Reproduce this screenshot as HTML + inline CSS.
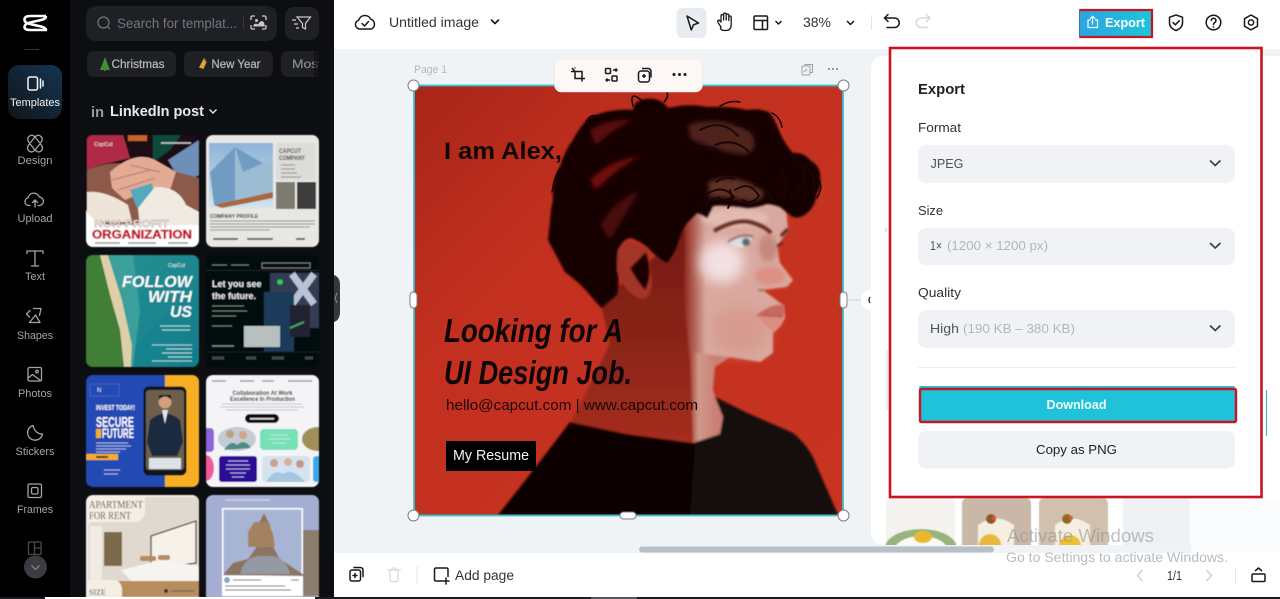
<!DOCTYPE html>
<html lang="en"><head><meta charset="utf-8"><title>Export</title>
<style>
html,body{margin:0;padding:0;background:#fff;overflow:hidden}
svg{display:block}
text{font-family:"Liberation Sans",sans-serif}
</style></head><body>
<svg xmlns="http://www.w3.org/2000/svg" width="1280" height="599" viewBox="0 0 1280 599">
<defs>
<linearGradient id="act" x1="0" y1="1" x2="1" y2="0"><stop offset="0" stop-color="#121418"/><stop offset="1" stop-color="#133552"/></linearGradient>
<linearGradient id="exp" x1="0" y1="0" x2="1" y2="0"><stop offset="0" stop-color="#2aa4e4"/><stop offset="1" stop-color="#1cc6d8"/></linearGradient>
<linearGradient id="redbg" x1="0" y1="0" x2="1" y2="1"><stop offset="0" stop-color="#a92619"/><stop offset=".35" stop-color="#c4301f"/><stop offset="1" stop-color="#c83421"/></linearGradient>
<linearGradient id="face" gradientUnits="userSpaceOnUse" x1="684" y1="0" x2="706" y2="0"><stop offset="0" stop-color="#8f271a"/><stop offset="1" stop-color="#d9a89e"/></linearGradient>
<linearGradient id="neck" gradientUnits="userSpaceOnUse" x1="0" y1="250" x2="0" y2="440"><stop offset="0" stop-color="#7a1c14"/><stop offset=".6" stop-color="#8f271a"/><stop offset="1" stop-color="#a62d1d"/></linearGradient>
<linearGradient id="lit" gradientUnits="userSpaceOnUse" x1="688" y1="0" x2="715" y2="0"><stop offset="0" stop-color="#9c2f20"/><stop offset=".4" stop-color="#d09a8c"/><stop offset="1" stop-color="#c98074"/></linearGradient>
<linearGradient id="sea" x1="0" y1="0" x2="1" y2="1"><stop offset="0" stop-color="#2b9294"/><stop offset="1" stop-color="#0f7d8c"/></linearGradient>
<linearGradient id="sky" x1="0" y1="0" x2="0" y2="1"><stop offset="0" stop-color="#8fb4d8"/><stop offset="1" stop-color="#d4e2ec"/></linearGradient>
<clipPath id="cv"><rect x="414" y="86" width="429" height="429"/></clipPath>
<clipPath id="c1"><rect x="86" y="135" width="113" height="112" rx="7"/></clipPath>
<clipPath id="c2"><rect x="206" y="135" width="113" height="112" rx="7"/></clipPath>
<clipPath id="c3"><rect x="86" y="255" width="113" height="112" rx="7"/></clipPath>
<clipPath id="c4"><rect x="206" y="255" width="113" height="112" rx="7"/></clipPath>
<clipPath id="c5"><rect x="86" y="375" width="113" height="112" rx="7"/></clipPath>
<clipPath id="c6"><rect x="206" y="375" width="113" height="112" rx="7"/></clipPath>
<clipPath id="c7"><rect x="86" y="495" width="113" height="112" rx="7"/></clipPath>
<clipPath id="c8"><rect x="206" y="495" width="113" height="112" rx="7"/></clipPath>
<clipPath id="chip"><rect x="70" y="45" width="249" height="40"/></clipPath>
<clipPath id="cake"><rect x="871" y="498" width="330" height="47"/></clipPath>
<filter id="soft" x="-5%" y="-5%" width="110%" height="110%"><feGaussianBlur stdDeviation="1"/></filter>
<filter id="soft2" x="-5%" y="-5%" width="110%" height="110%"><feGaussianBlur stdDeviation=".4"/></filter>
<filter id="shade" x="-40%" y="-40%" width="180%" height="180%"><feGaussianBlur stdDeviation="6"/></filter>
<filter id="shade2" x="-40%" y="-40%" width="180%" height="180%"><feGaussianBlur stdDeviation="2.500"/></filter>
</defs>

<!-- base -->
<rect width="1280" height="599" fill="#fff"/>
<rect x="334" y="49" width="946" height="504" fill="#f0f3f6"/>

<!-- right neighbour page -->
<rect x="871" y="56" width="420" height="489" rx="12" fill="#fff"/>
<rect x="1191" y="498" width="89" height="55" fill="#fbfcfd"/>
<path d="M887 350V410" stroke="#d8dbdf" stroke-width="1"/>
<path d="M886 228V232" stroke="#b9bcc1" stroke-width="1"/>
<path d="M1266.5 390V436" stroke="#3fb7c6" stroke-width="1.2"/>
<g clip-path="url(#cake)" filter="url(#soft2)">
  <rect x="886" y="498" width="69" height="60" rx="5" fill="#f4f3f0"/>
  <ellipse cx="921" cy="548" rx="36" ry="19" fill="#98b37b"/>
  <ellipse cx="921" cy="553" rx="28" ry="17" fill="#fbfaf4"/>
  <ellipse cx="923" cy="537" rx="9" ry="6" fill="#e8b92a"/>
  <rect x="962" y="498" width="69" height="60" rx="5" fill="#c9b8a8"/>
  <path d="M978 525Q996 512 1014 525V550H978Z" fill="#f5efdf"/>
  <circle cx="990" cy="545" r="11" fill="#e9b93d"/><circle cx="991" cy="519" r="5" fill="#8b5a24"/><circle cx="994" cy="518" r="2.200" fill="#d9542c"/>
  <rect x="1039" y="498" width="69" height="60" rx="5" fill="#d1c0ae"/>
  <path d="M1055 525Q1072 512 1090 525V550H1055Z" fill="#f5efdf"/>
  <circle cx="1070" cy="546" r="11" fill="#edc133"/><circle cx="1067" cy="519" r="5" fill="#8f6a24"/><circle cx="1071" cy="518" r="2.200" fill="#dd5a2c"/>
  <rect x="1123" y="498" width="67" height="50" fill="#eef1f4"/>
</g>

<!-- left rail / panel -->
<rect x="0" y="0" width="70" height="599" fill="#000"/>
<rect x="70" y="0" width="264" height="599" fill="#0d0e12"/>
<path d="M334 275q6 2 6 10v27q0 8-6 10Z" fill="#36373b"/>
<path d="M337 293l-2 5 2 5" stroke="#8c8d90" fill="none" stroke-width="1"/>

<!-- logo -->
<path d="M46 16H30.500Q24.500 16 24.500 19.500T30 24L41 26.500Q46 27.700 46 30H30.500Q24.500 30 24.500 27T30 22.500L41 20Q46 19 46 16" fill="none" stroke="#fff" stroke-width="2.600" stroke-linejoin="round"/>
<rect x="24" y="49" width="15" height="1" fill="#35363a"/>

<rect x="8" y="65" width="54" height="54" rx="11" fill="url(#act)"/>
<g fill="none" stroke="#f2f3f4" stroke-width="1.500" stroke-linejoin="round">
<rect x="28" y="77" width="9.500" height="13" rx="1.800"/><path d="M40.500 79V88M43 81V86" stroke-linecap="round"/>
</g>
<text x="35" y="106" text-anchor="middle" font-size="11" fill="#f2f3f4" textLength="50" lengthAdjust="spacingAndGlyphs">Templates</text>

<g fill="none" stroke="#a3a5a9" stroke-width="1.300" stroke-linejoin="round" stroke-linecap="round">
<path d="M29 136.500q3-3 6.500 1l5.500 7q3 4 0 6.500t-6.500-1.500l-5.500-7q-2.500-3.500 0-6ZM41 136.500q-3-3-6.500 1l-5.500 7q-3 4 0 6.500t6.500-1.500l5.500-7q2.500-3.500 0-6Z"/>
<path d="M30 205.500h-1.500a3.800 3.800 0 0 1-.6-7.500 6 6 0 0 1 11.500-1 4.300 4.300 0 0 1 .6 8.500H38M35 207v-7M32.500 202.500l2.500-2.500 2.500 2.500"/>
<path d="M27 251h16M35 251v15M31.500 266h7M27 251v2.500M43 251v2.500"/>
<path d="M30 310.500l-3.500 3.500 3 3M33.500 308.500h7.500l-1.500 7M35.500 315l4.500 7.500H29.500Z"/>
<rect x="28" y="367.500" width="13.500" height="13.500" rx="1.500"/><circle cx="37" cy="371.500" r="1.300"/><path d="M28 378l4.500-3.500 8 6"/>
<path d="M33 425.500a7.500 7.500 0 1 0 9.500 8.500Q35 434 33 425.500Z"/>
<rect x="28" y="484" width="13.500" height="13.500" rx="1.500"/><rect x="31.500" y="487.500" width="6.500" height="6.500" rx="1.500"/>
<g stroke="#4a4b4f"><rect x="28.500" y="542" width="12.500" height="12.500" rx="1"/><path d="M34.500 542v12.500M34.500 548h6.500"/></g>
</g>
<g font-size="11" fill="#a3a5a9" text-anchor="middle">
<text x="35" y="164" textLength="35" lengthAdjust="spacingAndGlyphs">Design</text>
<text x="35" y="222" textLength="35" lengthAdjust="spacingAndGlyphs">Upload</text>
<text x="35" y="280" textLength="20" lengthAdjust="spacingAndGlyphs">Text</text>
<text x="35" y="339" textLength="36" lengthAdjust="spacingAndGlyphs">Shapes</text>
<text x="35" y="397" textLength="34" lengthAdjust="spacingAndGlyphs">Photos</text>
<text x="35" y="455" textLength="39" lengthAdjust="spacingAndGlyphs">Stickers</text>
<text x="35" y="513" textLength="36" lengthAdjust="spacingAndGlyphs">Frames</text>
</g>
<circle cx="35.500" cy="567" r="11.500" fill="#3b3c41"/>
<path d="M31.500 565.500l4 4 4-4" fill="none" stroke="#808186" stroke-width="1.300"/>

<!-- search -->
<rect x="86" y="6" width="191" height="35" rx="10" fill="#1f2025"/>
<circle cx="103.500" cy="22.500" r="5.500" fill="none" stroke="#75777c" stroke-width="1.200"/><path d="M107.500 26.500l2.500 2.500" stroke="#75777c" stroke-width="1.200"/>
<text x="117" y="28" font-size="13.500" fill="#74767b" textLength="120" lengthAdjust="spacingAndGlyphs">Search for templat...</text>
<rect x="243" y="17" width="1" height="11" fill="#3a3b40"/>
<g fill="none" stroke="#c8c9cc" stroke-width="1.300"><path d="M251 20v-2.500q0-1.500 1.500-1.500h2.500M262 16h2.500q1.500 0 1.500 1.500V20M251 25v2.500q0 1.500 1.500 1.500h2.500M262 29h2.500q1.500 0 1.500-1.500V25"/></g><path d="M253 26.500q1-3 3-3l2 1q2-3.500 4-3.500t3 5.500Z" fill="#c8c9cc"/><circle cx="256.500" cy="20.500" r="1.500" fill="#c8c9cc"/>
<rect x="285" y="7" width="34" height="33" rx="9" fill="#1f2025"/>
<path d="M297 17h13.500l-5 6.500v5.500l-3-1.500v-4Z M292 20h4M294 24h4M296 28h3" fill="none" stroke="#c8c9cc" stroke-width="1.200"/>

<!-- chips -->
<g clip-path="url(#chip)">
<rect x="87" y="51" width="89" height="26" rx="7" fill="#1f2025"/>
<rect x="184" y="51" width="89" height="26" rx="7" fill="#1f2025"/>
<rect x="281" y="51" width="60" height="26" rx="7" fill="#1f2025"/>
<path d="M105 57l-5 13h10Z" fill="#3d8f3c"/><rect x="104" y="69" width="2" height="2" fill="#8a5a2a"/>
<path d="M204 58l2.500 4-3 7-4.500-1.500Z" fill="#e0a432"/><path d="M204 58l3 5" stroke="#555" stroke-width="1"/>
<text x="111.500" y="68" font-size="11.500" fill="#b4b6ba" stroke="#b4b6ba" stroke-width=".25" textLength="53" lengthAdjust="spacingAndGlyphs">Christmas</text>
<text x="211.500" y="68" font-size="11.500" fill="#b4b6ba" stroke="#b4b6ba" stroke-width=".25" textLength="49" lengthAdjust="spacingAndGlyphs">New Year</text>
<text x="292" y="68" font-size="11.500" fill="#85878b" stroke="#85878b" stroke-width=".25" textLength="30" lengthAdjust="spacingAndGlyphs">Most</text>
</g>
<rect x="314" y="51" width="5" height="26" fill="#0d0e12" opacity=".6"/>

<text x="91" y="117" font-size="14.500" font-weight="bold" fill="#9a9ca0" textLength="13" lengthAdjust="spacingAndGlyphs">in</text>
<text x="110" y="116" font-size="14.500" font-weight="bold" fill="#e8e9ea" textLength="94" lengthAdjust="spacingAndGlyphs">LinkedIn post</text>
<path d="M209.500 109.500l3.500 3.500 3.500-3.500" fill="none" stroke="#e8e9ea" stroke-width="1.400"/>

<!-- thumbnails -->
<g filter="url(#soft2)">
<g clip-path="url(#c1)">
  <rect x="86" y="135" width="113" height="112" fill="#1b1012"/>
  <path d="M87 135H123L130 158 100 165 87 170Z" fill="#b02a45"/>
  <rect x="128" y="135" width="19" height="6" fill="#c8622a"/>
  <path d="M153 135H181L170 150 153 162Z" fill="#114a3c"/>
  <path d="M168 160L199 140V175L182 184Z" fill="#6e8fb8"/>
  <path d="M87 170Q110 160 130 165L170 170 199 178V225H87Z" fill="#8d5a48"/>
  <path d="M110 172Q135 150 155 160L176 172 170 190 150 190 125 200 112 188Z" fill="#e3aa94"/>
  <path d="M112 180L150 170M118 190L155 178M130 165L160 172" stroke="#b97a66" stroke-width="1" fill="none"/>
  <path d="M87 192Q105 190 128 205L132 222H87Z" fill="#eee4d8"/>
  <path d="M130 190L152 183 154 198 137 208Z" fill="#52a9bd"/>
  <path d="M138 208L155 187Q178 186 186 205L199 212V228H140Z" fill="#f1eae2"/>
  <path d="M86 210Q92 222 110 225H199V247H86Z" fill="#fff"/>
  <text x="94" y="227" font-size="10" font-weight="bold" fill="#f7e6e3" stroke="#a79b99" stroke-width=".4" textLength="75" lengthAdjust="spacingAndGlyphs">NON-PROFIT</text>
  <text x="92" y="238.500" font-size="11.500" font-weight="bold" fill="#c3142b" stroke="#c3142b" stroke-width=".5" textLength="100" lengthAdjust="spacingAndGlyphs">ORGANIZATION</text>
  <path d="M95 243h25M128 243h28M168 243h20" stroke="#777" stroke-width="1.200"/>
  <text x="94" y="146" font-size="5.500" fill="#eee">CapCut</text>
  <path d="M161 143h30" stroke="#ccc" stroke-width="1.500"/>
</g>
<g clip-path="url(#c2)">
  <rect x="206" y="135" width="113" height="112" fill="#e8e7e3"/>
  <rect x="276" y="143" width="40" height="37" fill="#dcdcd9"/>
  <rect x="209" y="143" width="64" height="65" fill="url(#sky)"/>
  <path d="M210 172L235 147 266 165 273 159V198L222 204 214 205Z" fill="#6f9cc2"/>
  <path d="M235 147L243 172 273 159V198L245 202 235 200Z" fill="#9cbcd4"/>
  <path d="M214 205L273 192V198L222 208Z" fill="#a8673a"/>
  <text x="279" y="153" font-size="6.500" font-weight="bold" fill="#444" textLength="22" lengthAdjust="spacingAndGlyphs">CAPCUT</text>
  <text x="279" y="160" font-size="6.500" font-weight="bold" fill="#444" textLength="26" lengthAdjust="spacingAndGlyphs">COMPANY</text>
  <path d="M281 165h14M281 169h14M281 173h16M281 177h20" stroke="#888" stroke-width="1"/>
  <rect x="276" y="182" width="19" height="27" fill="#7d7a70"/><rect x="297" y="182" width="19" height="27" fill="#3d3d3a"/>
  <text x="210" y="218" font-size="5" font-weight="bold" fill="#222">COMPANY PROFILE</text>
  <path d="M210 221h105M210 224h105M210 227h100M210 230h60" stroke="#8a8a88" stroke-width="1"/>
  <path d="M213 239h25M247 239h26M296 239h9" stroke="#666" stroke-width="2"/>
</g>
<g clip-path="url(#c3)">
  <rect x="86" y="255" width="113" height="112" fill="url(#sea)"/>
  <path d="M86 255h14L112 300 122 340 124 367H86Z" fill="#3f7f35"/>
  <path d="M100 255h8L122 300 132 345 131 367H124L120 330 110 295Z" fill="#ddcfa8"/>
  <path d="M108 255h25L140 310 133 367H131L132 345 122 300Z" fill="#3a9f9c"/>
  <text x="122" y="287" font-size="16" font-weight="bold" font-style="italic" fill="#fff" textLength="70" lengthAdjust="spacingAndGlyphs">FOLLOW</text>
  <text x="148" y="302" font-size="16" font-weight="bold" font-style="italic" fill="#fff" textLength="44" lengthAdjust="spacingAndGlyphs">WITH</text>
  <text x="170" y="317" font-size="16" font-weight="bold" font-style="italic" fill="#fff" textLength="22" lengthAdjust="spacingAndGlyphs">US</text>
  <path d="M152 345h40M152 361h40" stroke="#cfeef0" stroke-width=".8"/>
  <path d="M160 326h30M162 330h28M166 349h26M162 353h30M168 357h24" stroke="#a8dcdc" stroke-width=".9"/>
  <text x="168" y="267" font-size="5" fill="#e8f4f4">CapCut</text>
</g>
<g clip-path="url(#c4)">
  <rect x="206" y="255" width="113" height="112" fill="#060708"/>
  <path d="M212 265h15M231 265h18M262 263h48v5h-48Z" stroke="#777" stroke-width="1" fill="none"/>
  <rect x="206" y="270" width="113" height=".8" fill="#2a2a2a"/>
  <rect x="270" y="273" width="49" height="55" fill="#313d52"/>
  <path d="M292 274l22 30M314 274l-22 30" stroke="#b9c3d6" stroke-width="7"/>
  <rect x="264" y="292" width="30" height="60" fill="#1c3a5a"/>
  <rect x="290" y="305" width="20" height="32" fill="#223"/><path d="M290 328l14-6" stroke="#38b060" stroke-width="2"/>
  <rect x="206" y="272" width="58" height="60" fill="#060708"/>
  <text x="212" y="287" font-size="9" font-weight="bold" fill="#f0f0f0">Let you see</text>
  <text x="212" y="299" font-size="9" font-weight="bold" fill="#f0f0f0">the future.</text>
  <circle cx="280" cy="282" r="2.800" fill="#2ec95c"/>
  <rect x="244" y="326" width="36" height="21" fill="#b7c0bf"/>
  <path d="M212 306h32M212 311h35M212 316h24M212 326h20" stroke="#6f7a72" stroke-width="1"/>
  <path d="M212 346h22" stroke="#888" stroke-width="1.500"/>
  <path d="M206 352h113" stroke="#1a1a1a"/>
  <path d="M212 358h12M246 358h10M272 358h12M305 358h8" stroke="#444" stroke-width="3"/>
</g>
<g clip-path="url(#c5)">
  <rect x="86" y="375" width="113" height="112" fill="#2148b4"/>
  <rect x="165" y="375" width="34" height="112" fill="#f8ae22"/>
  <rect x="90" y="384" width="29" height="12" fill="none" stroke="#5a78cc" stroke-width=".6"/>
  <text x="97" y="392" font-size="6" fill="#e4e9f6">N</text>
  <text x="96" y="410" font-size="7.500" font-weight="bold" fill="#fff" textLength="39" lengthAdjust="spacingAndGlyphs">INVEST TODAY!</text>
  <text x="96" y="427" font-size="15" font-weight="bold" fill="#fff" textLength="38" lengthAdjust="spacingAndGlyphs">SECURE</text>
  <rect x="96" y="429" width="5" height="9" fill="#f8ae22"/>
  <text x="102" y="438" font-size="14" font-weight="bold" fill="#fff" textLength="32" lengthAdjust="spacingAndGlyphs">FUTURE</text>
  <path d="M96 443h32M96 446h35M96 449h30M96 452h24" stroke="#a8b8e4" stroke-width=".9"/>
  <rect x="86" y="454" width="32" height="6" fill="#f8ae22"/><rect x="96" y="456" width="12" height="2" fill="#333"/>
  <path d="M104 470h16M104 474h14" stroke="#a8b8e4" stroke-width="1"/>
  <rect x="144" y="387" width="42" height="88" rx="5" fill="#11151c" stroke="#0b0e14" stroke-width="1"/>
  <rect x="146" y="390" width="38" height="80" rx="3" fill="#6d5f4b"/>
  <circle cx="165" cy="402" r="6.500" fill="#d1a07e"/><path d="M158.500 400q6.500-7 13 0l-1-5h-11Z" fill="#1c1612"/>
  <path d="M150 420q15-13 30 0l3 22-6 14h-25l-5-14Z" fill="#1f2a40"/>
  <path d="M162 410l3 14 3-14Z" fill="#e4e4ea"/>
  <rect x="149" y="458" width="32" height="11" fill="#dbe2ea"/>
</g>
<g clip-path="url(#c6)">
  <rect x="206" y="375" width="113" height="112" fill="#f4f4f7"/>
  <path d="M212 381h14M240 381h14M262 381h12M288 381h24" stroke="#888" stroke-width="1.200"/>
  <text x="262.500" y="395" text-anchor="middle" font-size="6.500" font-weight="bold" fill="#222" textLength="60" lengthAdjust="spacingAndGlyphs">Collaboration At Work</text>
  <text x="262.500" y="401" text-anchor="middle" font-size="6.500" font-weight="bold" fill="#222" textLength="65" lengthAdjust="spacingAndGlyphs">Excellence In Production</text>
  <path d="M222 404h80M220 407h84M226 410h72" stroke="#c6c6cc" stroke-width="1"/>
  <rect x="245" y="414" width="34" height="9" rx="4.500" fill="#0c0c0e"/><rect x="250" y="418" width="24" height="1.500" fill="#ddd"/>
  <rect x="200" y="428" width="14" height="24" rx="4" fill="#8d63dc"/>
  <ellipse cx="237" cy="439" rx="19" ry="12" fill="#c2ccd2"/><circle cx="230" cy="434" r="4" fill="#c79b82"/><circle cx="243" cy="435" r="4" fill="#d2a58a"/><path d="M224 450q7-11 13-5 8-7 14 3" fill="#4f8a86"/>
  <rect x="260" y="429" width="38" height="21" rx="4" fill="#76e0b7"/><path d="M270 435h18M268 439h22M272 443h14" stroke="#b8f0da"/>
  <ellipse cx="318" cy="439" rx="16" ry="12" fill="#a08f58"/>
  <ellipse cx="206" cy="468" rx="8" ry="13" fill="#ef5a9b"/>
  <rect x="219" y="456" width="38" height="26" rx="3" fill="#2c0f94"/><path d="M228 461h20M226 465h24M226 469h24M230 473h16M232 477h12" stroke="#b6a8ea" stroke-width=".9"/>
  <rect x="262" y="456" width="48" height="26" rx="4" fill="#d4e3ef"/><circle cx="274" cy="463" r="4" fill="#caa088"/><circle cx="288" cy="462" r="4" fill="#d5b199"/><circle cx="300" cy="464" r="4" fill="#c4967e"/><path d="M266 482q8-14 17-8 9-7 22 8" fill="#a4c6e0"/>
  <rect x="313" y="456" width="10" height="26" rx="3" fill="#37a8ec"/>
</g>
<g clip-path="url(#c7)">
  <rect x="86" y="495" width="113" height="112" fill="#f4efe4"/>
  <path d="M88 527q0-5 5-5h42q8 0 10-10V497h54v100H88Z" fill="#e0d9cf"/>
  <rect x="104" y="532" width="18" height="34" fill="#7c6b4d"/><rect x="90" y="526" width="12" height="56" fill="#f0ece4"/>
  <path d="M151 536l45-15v42l-45 6Z" fill="#f6f2e9" stroke="#4e3a2a" stroke-width="1.300"/>
  <path d="M121 570l40-10 38 6v21h-62Z" fill="#f5f4f0"/>
  <path d="M110 581h89v16H110Z" fill="#b88d5d"/>
  <rect x="140" y="556" width="16" height="5" rx="2" fill="#b78b60"/><rect x="158" y="555" width="12" height="5" rx="2" fill="#b78b60"/>
  <path d="M86 580h28q6 0 8 8v9H86Z" fill="#f4efe4"/>
  <text x="89" y="508" font-size="11" fill="#4b453d" style="font-family:'Liberation Serif',serif" textLength="54" lengthAdjust="spacingAndGlyphs">APARTMENT</text>
  <text x="89" y="519" font-size="11" fill="#4b453d" style="font-family:'Liberation Serif',serif" textLength="42" lengthAdjust="spacingAndGlyphs">FOR RENT</text>
  <text x="89" y="595" font-size="8" fill="#3e3a33" style="font-family:'Liberation Serif',serif">SIZE</text>
  <circle cx="166" cy="591" r="2" fill="#333"/>
  <path d="M171 591h23" stroke="#666" stroke-width="1.200"/>
</g>
<g clip-path="url(#c8)">
  <rect x="206" y="495" width="113" height="112" fill="#a4aed2"/>
  <rect x="222" y="508" width="81" height="88" fill="#fff"/>
  <rect x="223.500" y="509.500" width="78" height="66" fill="#a8b4d4"/>
  <path d="M223 575l10-12 15-4 10-14v-20l6-12 6 12 2 20 8 14 24 16v1Z" fill="#8a7460"/>
  <path d="M248 532l6-10h14l5 12 2 13h-27Z" fill="#a4825e"/>
  <path d="M240 574q5-18 20-18h10q15 0 20 18Z" fill="#949aa4"/>
  <rect x="303" y="530" width="19" height="66" fill="#8c7d6c"/>
  <path d="M225 500h45" stroke="#d0d6e6" stroke-width="1.200"/>
  <circle cx="227" cy="580" r="3" fill="#8ea0cc"/>
  <path d="M233 580h28M291 580h8M225 586h60M225 590h66" stroke="#555" stroke-width="1"/>
</g>
</g>

<!-- top bar -->
<rect x="334" y="0" width="946" height="49" fill="#fff"/>
<g fill="none" stroke="#17191c" stroke-width="1.500" stroke-linecap="round" stroke-linejoin="round">
<path d="M359.500 29a4.500 4.500 0 0 1-.8-8.800 6.500 6.500 0 0 1 12.100-1 5.300 5.300 0 0 1 .7 9.800Z"/><path d="M362 23.500l2.500 2.500 4-4.500"/>
<path d="M491.500 20l3.500 3.500 3.500-3.500" stroke-width="1.600"/>
</g>
<text x="389" y="27" font-size="13.500" fill="#30343a" textLength="90" lengthAdjust="spacingAndGlyphs">Untitled image</text>

<rect x="676.500" y="8" width="30" height="30" rx="6" fill="#e8ecf0"/>
<path d="M687 16l11.500 7-5 1.800-2.200 5.200Z" fill="none" stroke="#17191c" stroke-width="1.500" stroke-linejoin="round"/>
<path d="M721 27l-3-4.500q-1-2 1-2.500l2 2v-6q0-1.500 1.300-1.500t1.300 1.500v4-5.500q0-1.500 1.300-1.500t1.300 1.500v5.500-4.500q0-1.500 1.300-1.500t1.300 1.500v5-3q0-1.500 1.200-1.500t1.200 1.500v7q0 6-5.500 6h-1.500q-2.500 0-3.800-2Z" fill="none" stroke="#17191c" stroke-width="1.300" stroke-linejoin="round"/>
<g fill="none" stroke="#17191c" stroke-width="1.500" stroke-linejoin="round">
<rect x="754" y="16" width="13.500" height="13.500" rx="1.200"/><path d="M754 20.500h13.500M762.500 20.500v9"/>
<path d="M775.500 21l3 3 3-3"/><path d="M847 21l3.500 3.500 3.500-3.500"/>
</g>
<text x="803" y="27" font-size="13.500" fill="#30343a" textLength="28" lengthAdjust="spacingAndGlyphs">38%</text>
<rect x="871" y="15" width="1" height="15" fill="#e3e5e8"/>
<path d="M885 18h9.500a4.700 4.700 0 0 1 0 9.500H887M888 14.500l-3.500 3.500 3.500 3.500" fill="none" stroke="#17191c" stroke-width="1.500" stroke-linecap="round" stroke-linejoin="round"/>
<path d="M929.500 18H921a4.700 4.700 0 0 0 0 9.500h6.500M926.500 14.500l3.500 3.500-3.500 3.500" fill="none" stroke="#d6d9dc" stroke-width="1.500" stroke-linecap="round" stroke-linejoin="round"/>

<!-- export btn -->
<rect x="1079" y="9" width="74" height="29" fill="url(#exp)"/>
<path d="M1080 10h72v27h-72" fill="none" stroke="#c8141e" stroke-width="2.200"/>
<path d="M1079.500 9v29" stroke="#5a6c9a" stroke-width="1"/>
<g fill="none" stroke="#fff" stroke-width="1.200" stroke-linejoin="round" stroke-linecap="round"><path d="M1090 20h-2v7.500h9.500V20h-2M1092.500 24v-7M1090.500 18.500l2.200-2.200 2.200 2.200"/></g>
<text x="1105" y="27" font-size="13" font-weight="bold" fill="#fff" textLength="40" lengthAdjust="spacingAndGlyphs">Export</text>

<g fill="none" stroke="#17191c" stroke-width="1.500" stroke-linecap="round" stroke-linejoin="round">
<path d="M1176 15l6.500 2.200v5.800q0 5-6.500 7.500-6.500-2.500-6.500-7.500v-5.800Z"/><path d="M1173 22.500l2.300 2.300 4-4"/>
<circle cx="1213.500" cy="22.500" r="7.300"/><path d="M1211.300 20.500a2.300 2.300 0 1 1 3.500 2q-1.300.8-1.300 2"/>
<path d="M1251 15l6.500 3.700v7.500l-6.500 3.700-6.500-3.700v-7.500Z"/><circle cx="1251" cy="22.500" r="2.600"/>
</g>
<circle cx="1213.500" cy="27" r=".9" fill="#17191c"/>

<!-- canvas labels -->
<text x="414" y="73" font-size="11" fill="#b4b8be" textLength="33" lengthAdjust="spacingAndGlyphs">Page 1</text>
<g fill="none" stroke="#9aa0a7" stroke-width="1"><rect x="802" y="66" width="8" height="9" rx="1"/><path d="M805 66v-1.500h7.500v8H810"/><path d="M804 72l3-3"/></g>
<g fill="#8d9299"><circle cx="829" cy="69" r="1.100"/><circle cx="833" cy="69" r="1.100"/><circle cx="837" cy="69" r="1.100"/></g>

<!-- artwork -->
<g clip-path="url(#cv)">
  <rect x="414" y="86" width="429" height="429" fill="url(#redbg)"/>
  <g filter="url(#soft)">
    <!-- neck shadowed -->
    <path d="M600 300L640 270 695 220 700 445 627 436 570 424Q592 382 610 343Z" fill="url(#neck)"/>
    <!-- face -->
    <path d="M686 185H784L788 230 777 247 780 263 793 280 787 287 763 290 783 305 785 318 773 333 773 353 760 362 730 357 715 367 690 360 684 300Z" fill="url(#face)"/>
    <!-- lit neck -->
    <path d="M690 352L730 357 715 367 713 390 723 417 720 434 693 443Z" fill="url(#lit)"/>
    <!-- shirt -->
    <path d="M498 515Q530 475 570 422L627 434 693 443 720 434 723 417 715 397 747 413 793 433Q810 447 817 467L838 515Z" fill="#0c0406"/>
    <path d="M690 515L695 443 720 434 723 417 715 397 747 413 793 433Q810 447 817 467L838 515Z" fill="#1b090c" opacity=".8"/>
  </g>
  <!-- soft face light -->
  <ellipse cx="722" cy="262" rx="22" ry="21" fill="#f3e0e3" filter="url(#shade)"/>
  <ellipse cx="735" cy="218" rx="34" ry="9" fill="#e2bcb0" filter="url(#shade2)"/>
  <ellipse cx="740" cy="330" rx="28" ry="24" fill="#d79b8e" filter="url(#shade)"/>
  <ellipse cx="770" cy="276" rx="15" ry="9" fill="#dc9182" filter="url(#shade2)"/>
  <ellipse cx="768" cy="248" rx="9" ry="14" fill="#c58a7e" filter="url(#shade2)"/>
  <g filter="url(#soft)">
    <!-- lips -->
    <path d="M757 315Q772 303 784 305 786 311 783 317Z" fill="#c6685e"/>
    <path d="M757 315L783 317Q784 326 773 332 766 326 757 315Z" fill="#dc8d80"/>
    <path d="M757 315L783 317" stroke="#a24a42" stroke-width="1"/>
    <path d="M764 290q-6 1-5-1" stroke="#a2564c" stroke-width="1.500" fill="none"/>
    <!-- brow & eye -->
    <path d="M714 231Q735 219 750 222 765 226 771 233" stroke="#5e2a1f" stroke-width="3.800" fill="none"/>
    <path d="M781 236L788 229" stroke="#5e2a1f" stroke-width="3.500"/>
    <path d="M728 243Q742 234 752 238 750 247 738 248Z" fill="#e2dcde"/>
    <circle cx="746" cy="242" r="4" fill="#5a6a76"/>
    <path d="M728 242Q742 233 753 237" stroke="#4a1a14" stroke-width="1.400" fill="none"/>
    <path d="M777 246l6-3" stroke="#5e2218" stroke-width="2.200"/>
    <!-- ear -->
    <path d="M626 240Q616 248 617 266 620 288 638 298 652 302 652 280L648 248Z" fill="#a23426"/>
    <!-- hair -->
    <path d="M553 200Q552 180 560 167 565 150 573 140 580 126 590 117 612 108 633 110 634 100 646 99 660 97 668 108 690 103 707 107 730 106 747 110 762 108 770 113 776 122 780 133 786 146 793 153 803 152 810 160 821 167 820 177 822 186 817 193 815 207 807 213 800 219 793 217 786 212 780 207 772 204 767 204 756 208 747 208 736 206 727 206 720 205 713 206 710 212 707 218 702 214 697 213 692 218 687 223 683 230 680 237 676 252 667 263 658 258 650 250 640 240 630 238 623 240 618 250 617 257 617 270 620 280 617 295 607 303 602 308 600 307 590 295 580 283 565 272 557 257 548 240 550 223 551 210 553 200Z" fill="#160406"/>
    <path d="M630 268Q636 280 645 290 654 275 646 252Z" fill="#1a0506"/>
  </g>
  <!-- hair lights -->
  <path d="M590 180Q610 160 640 156 615 170 596 190Z" fill="#750c0c" filter="url(#shade2)"/>
  <path d="M590 130Q610 118 635 120 610 130 596 146Z" fill="#5c0d0d" filter="url(#shade2)"/>
  <path d="M600 225Q615 200 640 190 625 215 610 240Z" fill="#4a0a0a" filter="url(#shade2)"/>
  <path d="M688 125Q720 115 752 132 760 150 745 155 710 150 690 138Z" fill="#4f211c" filter="url(#shade2)"/>
  <path d="M708 182Q735 172 762 190 768 199 750 202 725 195 710 198Z" fill="#5e3026" filter="url(#shade2)"/>
  <g fill="none" stroke="#1a0507" stroke-width="1.800" stroke-linecap="round">
    <path d="M700 130q22-12 38 6M715 145q20-8 35 8M735 125q16 0 22 18M694 150q16-8 28 4"/>
    <path d="M706 195q16-12 28 2-12 6-16 0M735 190q15-10 24 6-8 10-16 4M755 185q14 2 18 18M700 212q6-12 16-14M728 208q6-10 2-18M716 182q10-6 18-3"/>
    <path d="M790 155q14 6 14 22-4 14-14 20M804 165q12 8 10 26M780 170q10 12 4 28"/>
  </g>
  <g fill="none" stroke="#120305" stroke-width="1.500" stroke-linecap="round">
    <path d="M641 100q-12-10-8 6M664 102q6-6 2-12M720 106q10-6 20-4M772 113q8 4 10 14M818 180q6 6-1 18M596 116q-6-2-10 6M560 168q-6 10-8 24"/>
  </g>
  <text x="444" y="159" font-size="24" font-weight="bold" fill="#120708" textLength="118" lengthAdjust="spacingAndGlyphs">I am Alex,</text>
  <text x="444" y="342" font-size="33" font-weight="bold" font-style="italic" fill="#0f0506" textLength="179" lengthAdjust="spacingAndGlyphs">Looking for A</text>
  <text x="444" y="384" font-size="33" font-weight="bold" font-style="italic" fill="#0f0506" textLength="188" lengthAdjust="spacingAndGlyphs">UI Design Job.</text>
  <text x="446" y="410" font-size="14.500" fill="#1a0808" textLength="252" lengthAdjust="spacingAndGlyphs">hello@capcut.com | www.capcut.com</text>
  <rect x="446" y="441" width="90" height="30" fill="#000"/>
  <text x="453" y="460" font-size="14.500" fill="#f4f4f4" textLength="76" lengthAdjust="spacingAndGlyphs">My Resume</text>
</g>
<rect x="414" y="85.500" width="429" height="430" fill="none" stroke="#35c2d3" stroke-width="1.800"/>
<g fill="#fff" stroke="#7a7f85" stroke-width="1">
<circle cx="413.500" cy="85.500" r="5.500"/><circle cx="843.500" cy="85.500" r="5.500"/><circle cx="413.500" cy="515.500" r="5.500"/><circle cx="843.500" cy="515.500" r="5.500"/>
<rect x="410" y="292" width="7" height="16" rx="3.500"/><rect x="840" y="292" width="7" height="16" rx="3.500"/><rect x="620" y="512" width="16" height="7" rx="3.500"/>
</g>
<path d="M847 300h14" stroke="#cdd2d7"/>
<path d="M871 290a10 10 0 0 0 0 20Z" fill="#fff"/><path d="M870 297q-2 3 0 6" stroke="#222" fill="none" stroke-width="1.300"/>

<!-- floating toolbar -->
<rect x="554.500" y="59" width="148" height="33" rx="7" fill="#fdf7f6" stroke="#e9e5e5" stroke-width=".6"/>
<g fill="none" stroke="#17191c" stroke-width="1.500" stroke-linejoin="round">
<path d="M575 68.500v-1M571 71.500h11v10M575 71.500v7h10"/><path d="M572 68l3 3.500"/>
<rect x="605.500" y="68.500" width="5" height="5" rx="1"/><rect x="612" y="76" width="5" height="5" rx="1"/><path d="M613 70h4l-1.500-1.500M617 70l-1.500 1.500M610 80h-4l1.500-1.500M606 80l1.500 1.500"/>
<rect x="638.500" y="71" width="11" height="11" rx="2.500"/><path d="M642 68.500h6q3 0 3 3v6M644 74v4M642 76h4"/>
</g>
<g fill="#17191c"><circle cx="674" cy="74.500" r="1.500"/><circle cx="679.500" cy="74.500" r="1.500"/><circle cx="685" cy="74.500" r="1.500"/></g>

<!-- bottom bar -->
<rect x="334" y="553" width="946" height="44" fill="#fff"/>
<rect x="639" y="546.500" width="355" height="6" rx="3" fill="#b9bfc6"/>
<g fill="none" stroke-linejoin="round" stroke-linecap="round">
<g stroke="#17191c" stroke-width="1.500"><rect x="350" y="570" width="10.500" height="11" rx="2"/><path d="M354 567.500h6q3 0 3 3v6"/><path d="M355 573.500v4M353 575.500h4"/></g>
<g stroke="#d7dadd" stroke-width="1.300"><path d="M387.500 570h13M390 570v10q0 1.500 1.500 1.500h5q1.500 0 1.500-1.500v-10M392 570v-2h4v2"/></g>
<path d="M417 567v16" stroke="#e3e5e8"/>
<g stroke="#17191c" stroke-width="1.500"><path d="M444 581h-8q-1.500 0-1.500-1.500v-10q0-1.500 1.500-1.500h10.500q1.500 0 1.500 1.500v7M446 578v6M443 581h6"/></g>
</g>
<text x="455" y="580" font-size="13.500" fill="#2e3238" textLength="59" lengthAdjust="spacingAndGlyphs">Add page</text>
<text x="1167" y="580" font-size="13" fill="#2e3238" textLength="15" lengthAdjust="spacingAndGlyphs">1/1</text>
<path d="M1142.500 570l-5 5.500 5 5.500M1206.500 570l5 5.500-5 5.500" fill="none" stroke="#ccd0d4" stroke-width="1.400"/>
<path d="M1235.500 568v15" stroke="#e3e5e8"/>
<g fill="none" stroke="#17191c" stroke-width="1.500" stroke-linejoin="round"><rect x="1252" y="574" width="13" height="7.500" rx="1"/><path d="M1255 571l3.500-3 3.500 3"/></g>
<rect x="0" y="597" width="1280" height="2" fill="#1a1b1e"/>
<rect x="45" y="597" width="270" height="2" fill="#fff"/>
<rect x="591" y="597" width="46" height="2" fill="#55575a"/>

<!-- export panel -->
<rect x="890" y="48" width="371.500" height="449" fill="#fff" stroke="#c8141e" stroke-width="2.600"/>
<text x="918" y="94" font-size="14.500" font-weight="bold" fill="#1c1f23" textLength="47" lengthAdjust="spacingAndGlyphs">Export</text>
<text x="918" y="132" font-size="13" fill="#2d3136" textLength="43" lengthAdjust="spacingAndGlyphs">Format</text>
<rect x="918" y="145" width="317" height="38" rx="8" fill="#f0f2f5"/>
<text x="930.500" y="168" font-size="13" fill="#4f5358" textLength="33" lengthAdjust="spacingAndGlyphs">JPEG</text>
<text x="918" y="215" font-size="13" fill="#2d3136" textLength="25" lengthAdjust="spacingAndGlyphs">Size</text>
<rect x="918" y="228" width="317" height="37" rx="8" fill="#f0f2f5"/>
<text x="930" y="250" font-size="13" fill="#4f5358" textLength="12" lengthAdjust="spacingAndGlyphs">1×</text>
<text x="947" y="250" font-size="13" fill="#b3b7bc" textLength="101" lengthAdjust="spacingAndGlyphs">(1200 × 1200 px)</text>
<text x="918" y="297" font-size="13" fill="#2d3136" textLength="43" lengthAdjust="spacingAndGlyphs">Quality</text>
<rect x="918" y="310" width="317" height="38" rx="8" fill="#f0f2f5"/>
<text x="930" y="333" font-size="13" fill="#4f5358" textLength="29" lengthAdjust="spacingAndGlyphs">High</text>
<text x="963" y="333" font-size="13" fill="#b3b7bc" textLength="112" lengthAdjust="spacingAndGlyphs">(190 KB – 380 KB)</text>
<g fill="none" stroke="#3a3e44" stroke-width="1.700"><path d="M1210 160.500l5.200 5 5.200-5M1210 243l5.200 5 5.200-5M1210 325.500l5.200 5 5.200-5"/></g>
<rect x="918" y="367" width="317" height="1" fill="#eceef0"/>
<rect x="919" y="386" width="316" height="4" rx="2" fill="#1fc2d8"/>
<rect x="920" y="389" width="316" height="33" rx="1.500" fill="#1fc2d8" stroke="#c8141e" stroke-width="2.400"/>
<text x="1076.500" y="409" text-anchor="middle" font-size="13" font-weight="bold" fill="#f2fbfd" textLength="60" lengthAdjust="spacingAndGlyphs">Download</text>
<rect x="918" y="431" width="317" height="37.500" rx="8" fill="#f0f2f5"/>
<text x="1076.500" y="454" text-anchor="middle" font-size="13" fill="#1c1f23" textLength="81" lengthAdjust="spacingAndGlyphs">Copy as PNG</text>

<!-- watermark -->
<text x="1007" y="542" font-size="18" fill="#8a8e94" opacity=".55" textLength="147" lengthAdjust="spacingAndGlyphs">Activate Windows</text>
<text x="1006" y="562" font-size="13.500" fill="#8a8e94" opacity=".6" textLength="222" lengthAdjust="spacingAndGlyphs">Go to Settings to activate Windows.</text>
</svg>
</body></html>
